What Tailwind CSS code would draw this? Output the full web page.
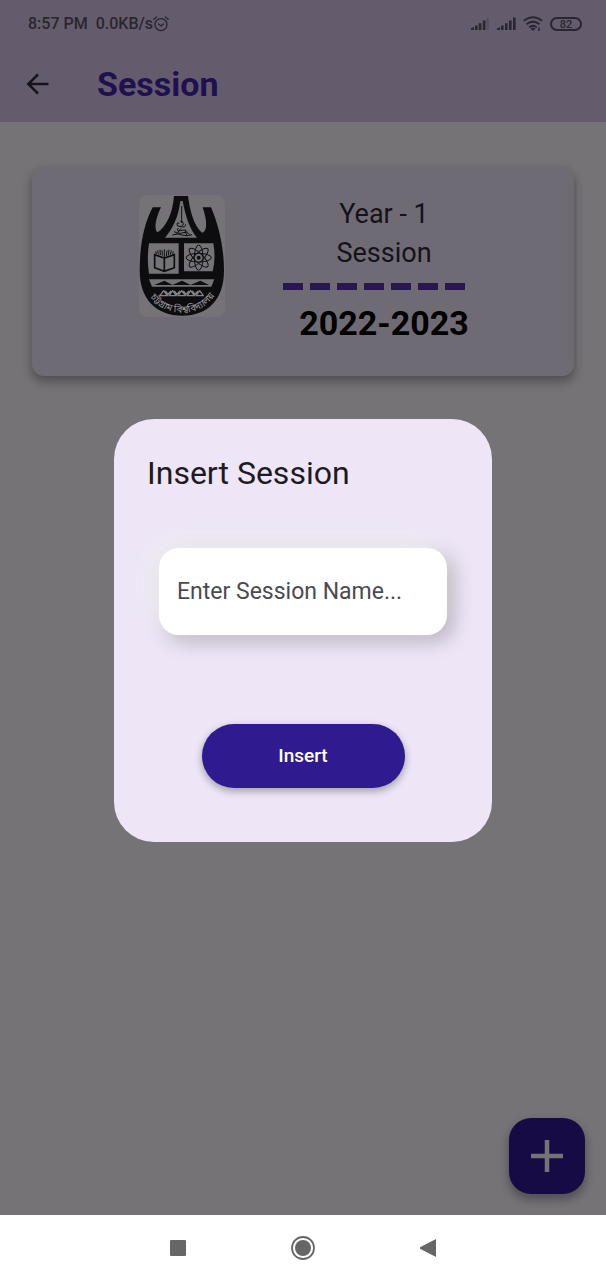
<!DOCTYPE html>
<html lang="en">
<head>
<meta charset="utf-8">
<meta name="viewport" content="width=device-width, initial-scale=1">
<title>Session</title>
<script src="https://cdn.jsdelivr.net/npm/@tailwindcss/browser@4"></script>
</head>
<body class="relative flex min-h-screen flex-col bg-[#767376] font-[Roboto,sans-serif]">
  <header class="bg-[#645c6d]">
    <div class="flex h-12 items-center justify-between pr-6 pl-7 text-base font-medium text-[#2a252f]">
      <div class="flex items-center">
        <span>8:57 PM</span>
        <span class="ml-2">0.0KB/s</span>
        <svg class="size-4" viewBox="0 0 16 16" fill="none" stroke="currentColor" stroke-width="1.4" stroke-linecap="round" stroke-linejoin="round" aria-label="Alarm">
          <circle cx="8" cy="8.6" r="6"/><path d="M.8 3.2 3.6 1M15.2 3.2 12.4 1M5.600 8l2.400 2 2.500-2"/>
        </svg>
      </div>
      <div class="flex items-center gap-[7px]">
        <svg class="h-4 w-[19px]" viewBox="0 0 19 16" fill="currentColor" aria-label="Signal">
          <path d="M0 12.500l3-1.500v3H0zM4 9.600h2.600V14H4zM7.800 7.300h2.600V14H7.800zM11.800 4.500h2.600V14h-2.600z"/><path opacity=".25" d="M15.500 2h2.400v12h-2.400z"/>
        </svg>
        <svg class="h-4 w-[19px]" viewBox="0 0 19 16" fill="currentColor" aria-label="Signal">
          <path d="M0 12.500l3-1.500v3H0zM4 9.600h2.600V14H4zM8 7.300h2.600V14H8zM12 4.500h2.600V14H12zM16 1.500h2.600V14H16z"/>
        </svg>
        <svg class="h-4 w-5" viewBox="0 0 20 16" fill="none" stroke="currentColor" stroke-width="2" aria-label="Wi-Fi">
          <path d="M.8 4.800Q10-2.400 19.200 4.800M3.600 8.200Q10 3 16.400 8.200M6.300 11.300Q10 8.500 13.700 11.300"/><path d="M7.500 12.500 10 15l2.500-2.500Q10 11 7.500 12.500z" fill="currentColor" stroke="none"/><path stroke-width="1.500" d="M16 11.500v3.500"/>
        </svg>
        <span class="flex h-3.5 w-8 items-center justify-center rounded-full border-2 border-current text-[11px] leading-none">82</span>
      </div>
    </div>
    <div class="flex h-[74px] items-start px-6 pt-4">
      <button type="button" aria-label="Back" class="mt-[6px] text-[#16121a]">
        <svg class="size-7" viewBox="0 0 28 28" fill="none" stroke="currentColor" stroke-width="2.500"><path d="M24.500 14H5M14 4.300 4.300 14l9.700 9.700"/></svg>
      </button>
      <h1 class="ml-[45px] text-[34px] leading-10 font-bold text-[#1f104f]">Session</h1>
    </div>
  </header>

  <main class="relative flex-1 px-8 pt-[45px]">
    <section class="flex h-[209px] rounded-xl bg-[#6f6b74] pt-7 pr-[89px] pl-[107px] shadow-[0_5px_10px_1px_rgba(0,0,0,0.3)]">
      <svg class="h-[122px] w-[86px] shrink-0" viewBox="27 29 258 366" fill="#0d0d10" aria-label="University crest">
        <rect x="27" y="29" width="258" height="366" rx="26" fill="#757377"/>
        <path d="M132 32H174C180 78 192 122 216 142C229 140 235 116 218 66H243C268 123 282 191 282 256C282 344 231 391 158 391C76 391 29 338 29 256C29 188 39 121 68 66H93C75 103 72 135 83 141C108 124 128 86 132 32Z"/>
        <g fill="#757377">
          <path d="M151 47H158C166 91 179 132 201 157H105C129 128 145 96 151 47Z"/>
          <path d="M57 174H146V265H57Q50 220 57 174ZM162 174H250Q258 220 248 258H162Z"/>
          <path d="M57 282H253L244 304H66Z"/>
        </g>
        <path d="M73 299 103 286 128 299ZM127 299 156 286 182 299ZM181 299 211 286 237 299Z"/>
        <g fill="none" stroke="#0d0d10" stroke-width="3">
          <path d="M155 62V113M148 114q-11-4-5 8q15 5 17-7q-4-13-9-5M151 123q16 6 16-6M145 128q-8 11 7 8q17-5 19 3M132 139q17 8 27 3q12-5 20 5M127 149q17-6 29 0q15 5 30-1M140 145l13-16M165 136l5 13"/>
          <path stroke-width="5" d="M74 208 103 218 133 208V247L103 258 74 247ZM103 218V257"/>
          <path d="M79 207 77 198M85 207 83 195M91 209 90 193M97 211 96 195M103 216V192M109 212 111 195M115 210 117 193M121 208 124 195M128 207 130 198"/>
          <g>
            <ellipse cx="206" cy="217" rx="38" ry="13"/>
            <ellipse cx="206" cy="217" rx="38" ry="13" transform="rotate(45 206 217)"/>
            <ellipse cx="206" cy="217" rx="38" ry="13" transform="rotate(90 206 217)"/>
            <ellipse cx="206" cy="217" rx="38" ry="13" transform="rotate(135 206 217)"/>
          </g>
        </g>
        <circle cx="206" cy="217" r="6"/>
        <path fill="none" stroke="#858285" stroke-width="4" stroke-linejoin="round" d="M90 331 101 316 112 331ZM117 331 128 316 139 331ZM144 331 155 316 166 331ZM171 331 182 316 193 331ZM198 331 209 316 220 331ZM106 317 114 327 123 317M133 317 141 327 150 317M160 317 168 327 177 317M187 317 195 327 204 317"/>
        <path id="motto" fill="none" d="M58 333Q94 382 157 382Q220 382 256 328"/>
        <text fill="#a09da0" font-size="29" text-anchor="middle" font-family="Noto Sans Bengali, Noto Sans, sans-serif"><textPath href="#motto" startOffset="50%">চট্টগ্রাম বিশ্ববিদ্যালয়</textPath></text>
      </svg>
      <div class="ml-auto flex w-[202px] flex-col items-center text-[#151219]">
        <p class="text-[27px] leading-[39px]">Year - 1</p>
        <p class="text-[27px] leading-[39px]">Session</p>
        <div class="mt-[10px] flex w-full gap-[7px]" aria-hidden="true">
          <i class="h-[7px] w-5 bg-[#27184f]"></i><i class="h-[7px] w-5 bg-[#27184f]"></i><i class="h-[7px] w-5 bg-[#27184f]"></i><i class="h-[7px] w-5 bg-[#27184f]"></i><i class="h-[7px] w-5 bg-[#27184f]"></i><i class="h-[7px] w-5 bg-[#27184f]"></i><i class="h-[7px] w-5 bg-[#27184f]"></i>
        </div>
        <p class="mt-3 text-[34px] leading-[42px] font-bold text-black">2022-2023</p>
      </div>
    </section>
    <button type="button" aria-label="Add session" class="absolute right-[21px] bottom-[21px] flex size-[76px] items-center justify-center rounded-[22px] bg-[#170b45] text-[#767376] shadow-[0_5px_8px_1px_rgba(0,0,0,0.3)]">
      <svg class="size-8" viewBox="0 0 32 32" fill="none" stroke="currentColor" stroke-width="4.500"><path d="M0 16h32M16 0v32"/></svg>
    </button>
  </main>

  <nav class="flex h-[65px] items-center justify-center gap-[105px] bg-white text-[#666]">
    <button type="button" aria-label="Recent apps"><svg class="size-4" viewBox="0 0 16 16" fill="currentColor"><rect width="16" height="16" rx="1"/></svg></button>
    <button type="button" aria-label="Home"><svg class="size-6" viewBox="0 0 24 24" fill="currentColor"><circle cx="12" cy="12" r="11" fill="none" stroke="currentColor" stroke-width="1.800"/><circle cx="12" cy="12" r="8"/></svg></button>
    <button type="button" aria-label="Back to previous screen"><svg class="h-[18px] w-4" viewBox="0 0 16 18" fill="currentColor"><path d="M16 0v18L0 9.700V8.300z"/></svg></button>
  </nav>

  <div class="absolute inset-x-0 top-[419px] flex justify-center">
    <form role="dialog" aria-labelledby="dialog-title" class="flex w-[378px] max-w-full flex-col rounded-[40px] bg-[#eee6f7] px-[33px] pt-[34px] pb-[54px]">
      <h2 id="dialog-title" class="text-[32px] leading-10 text-[#1d1a22]">Insert Session</h2>
      <input type="text" aria-label="Session name" placeholder="Enter Session Name..." class="mx-3 mt-[55px] h-[87px] rounded-[20px] bg-white px-[18px] text-[23px] text-[#49454f] shadow-[-6px_-6px_20px_rgba(240,240,240,0.9),6px_6px_20px_rgba(0,0,0,0.26)] placeholder:text-[#4c494f]">
      <button type="button" class="mt-[89px] h-16 w-[203px] self-center rounded-full bg-[#2f1a90] pt-px text-[19px] font-medium text-white shadow-[0_3px_7px_1px_rgba(0,0,0,0.28)]">Insert</button>
    </form>
  </div>
</body>
</html>
